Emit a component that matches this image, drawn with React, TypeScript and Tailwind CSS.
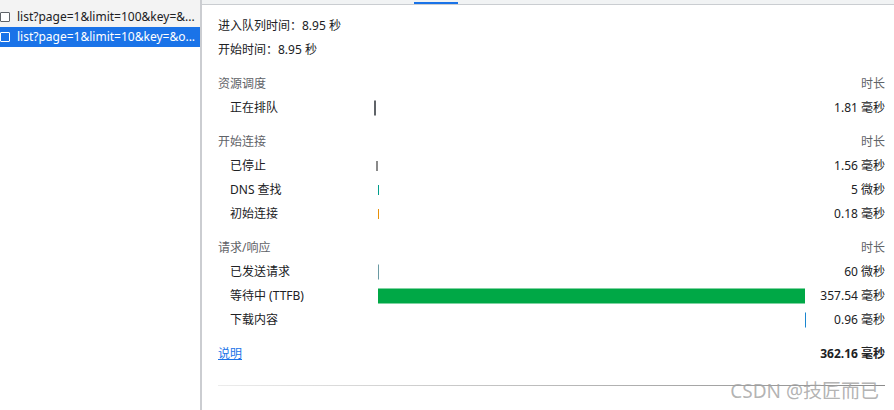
import React from 'react';

const TOTAL = 362.16;

type Row = {
  label: string;
  value: string;
  start: number;
  dur: number;
  color: string;
  tall: boolean;
};

const sections: { title: string; rows: Row[] }[] = [
  {
    title: '资源调度',
    rows: [{ label: '正在排队', value: '1.81 毫秒', start: 0, dur: 1.81, color: 'bg-[#5f6368]', tall: true }],
  },
  {
    title: '开始连接',
    rows: [
      { label: '已停止', value: '1.56 毫秒', start: 1.81, dur: 1.56, color: 'bg-[#8a8a8a]', tall: false },
      { label: 'DNS 查找', value: '5 微秒', start: 3.37, dur: 0.005, color: 'bg-[#009e8c]', tall: false },
      { label: '初始连接', value: '0.18 毫秒', start: 3.38, dur: 0.18, color: 'bg-[#e8910a]', tall: false },
    ],
  },
  {
    title: '请求/响应',
    rows: [
      { label: '已发送请求', value: '60 微秒', start: 3.56, dur: 0.06, color: 'bg-[#6b9aa3]', tall: true },
      { label: '等待中 (TTFB)', value: '357.54 毫秒', start: 3.62, dur: 357.54, color: 'bg-[#00a846]', tall: true },
      { label: '下载内容', value: '0.96 毫秒', start: 361.16, dur: 0.96, color: 'bg-[#1a86d0]', tall: true },
    ],
  },
];

const Bar: React.FC<{ row: Row }> = ({ row }) => (
  <div className="relative h-full flex-1">
    <div
      className={`absolute top-1/2 -translate-y-1/2 ${row.color} ${row.tall ? 'h-[15px]' : 'h-[10px]'}`}
      style={{
        left: `${(row.start / TOTAL) * 100}%`,
        width: `max(1px, ${(row.dur / TOTAL) * 100}%)`,
      }}
    />
  </div>
);

export default function App() {
  return (
    <div className="relative flex h-[410px] w-[894px] overflow-hidden bg-white text-[12px] text-[#202124] font-['Noto_Sans','Noto_Sans_CJK_SC',sans-serif]">
      {/* request list */}
      <aside className="w-[202px] shrink-0 border-r-2 border-[#cbcdd1]">
        <div className="h-[7px] bg-[#f3f3f3]" />
        <div className="flex h-[20px] items-center bg-[#f3f3f3]">
          <span className="ml-[0px] h-[10px] w-[10px] rounded-[1px] border border-[#5f6368] bg-white" />
          <span className="ml-[7px] whitespace-nowrap">list?page=1&amp;limit=100&amp;key=&amp;...</span>
        </div>
        <div className="flex h-[20px] items-center bg-[#1a73e8] text-white">
          <span className="ml-[0px] h-[10px] w-[10px] rounded-[1px] border border-white" />
          <span className="ml-[7px] whitespace-nowrap">list?page=1&amp;limit=10&amp;key=&amp;o...</span>
        </div>
      </aside>

      {/* timing panel */}
      <main className="flex min-w-0 flex-1 flex-col">
        <div className="flex h-[5px] border-b border-[#cacdd1] bg-[#f1f3f4]">
          <div className="ml-[212px] mt-[2px] h-[2px] w-[44px] bg-[#1a73e8]" />
        </div>

        <div className="flex flex-col pl-4 pr-[9px] pt-[9px]">
          <div className="flex h-[24px] items-center">进入队列时间：8.95 秒</div>
          <div className="flex h-[24px] items-center">开始时间：8.95 秒</div>

          {sections.map((s) => (
            <div key={s.title} className="mt-[10px] flex flex-col">
              <div className="flex h-[24px] items-center justify-between text-[#5f6368]">
                <span>{s.title}</span>
                <span>时长</span>
              </div>
              {s.rows.map((r) => (
                <div key={r.label} className="flex h-[24px] items-center">
                  <div className="w-[156px] shrink-0 pl-3">{r.label}</div>
                  <Bar row={r} />
                  <div className="w-[79px] shrink-0 text-right whitespace-nowrap">{r.value}</div>
                </div>
              ))}
            </div>
          ))}

          <div className="mt-[10px] flex h-[24px] items-center justify-between">
            <a className="text-[#1a73e8] underline">说明</a>
            <span className="font-bold">362.16 毫秒</span>
          </div>

          <div className="mt-[19px] h-px bg-gradient-to-r from-[#ececec] to-[#8c8c8c]" />
        </div>
      </main>

      <div className="pointer-events-none absolute bottom-[9px] right-[15px] text-[19px] leading-none text-[#a0a0a0]/80">
        CSDN @技匠而已
      </div>
    </div>
  );
}
